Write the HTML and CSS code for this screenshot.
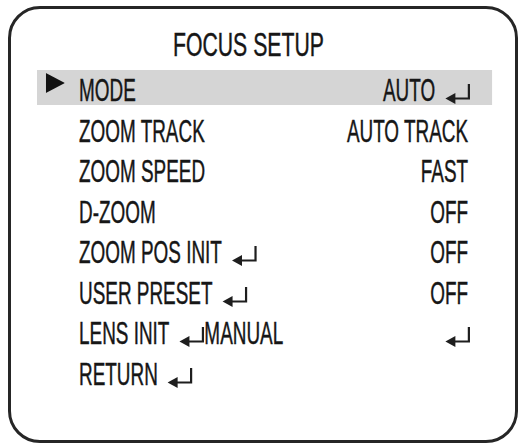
FILE: index.html
```html
<!DOCTYPE html>
<html lang="en">
<head>
<meta charset="utf-8">
<title>Focus Setup</title>
<link rel="stylesheet" href="styles.css">
</head>
<body>
<div class="frame">
  <h1 class="title"><span class="title-text">FOCUS SETUP</span></h1>
  <ul class="menu">
    <li class="row row-active">
      <span class="marker"><svg class="pointer" viewBox="0 0 19 20" preserveAspectRatio="none"><polygon points="0,0 19,10 0,20"/></svg></span>
      <span class="label">MODE</span>
      <span class="value value-arrow">AUTO<svg class="enter" viewBox="0 0 25 21" preserveAspectRatio="none"><path d="M23.5 1V15.5H8"/><polygon points="0,15.5 10,10 10,21"/></svg></span>
    </li>
    <li class="row">
      <span class="marker"></span>
      <span class="label">ZOOM TRACK</span>
      <span class="value">AUTO TRACK</span>
    </li>
    <li class="row">
      <span class="marker"></span>
      <span class="label">ZOOM SPEED</span>
      <span class="value">FAST</span>
    </li>
    <li class="row">
      <span class="marker"></span>
      <span class="label">D-ZOOM</span>
      <span class="value">OFF</span>
    </li>
    <li class="row">
      <span class="marker"></span>
      <span class="label">ZOOM POS INIT<svg class="enter" viewBox="0 0 25 21" preserveAspectRatio="none"><path d="M23.5 1V15.5H8"/><polygon points="0,15.5 10,10 10,21"/></svg></span>
      <span class="value">OFF</span>
    </li>
    <li class="row">
      <span class="marker"></span>
      <span class="label">USER PRESET<svg class="enter" viewBox="0 0 25 21" preserveAspectRatio="none"><path d="M23.5 1V15.5H8"/><polygon points="0,15.5 10,10 10,21"/></svg></span>
      <span class="value">OFF</span>
    </li>
    <li class="row">
      <span class="marker"></span>
      <span class="label">LENS INIT<svg class="enter" viewBox="0 0 25 21" preserveAspectRatio="none"><path d="M23.5 1V15.5H8"/><polygon points="0,15.5 10,10 10,21"/></svg>MANUAL</span>
      <span class="value value-arrow"><svg class="enter" viewBox="0 0 25 21" preserveAspectRatio="none"><path d="M23.5 1V15.5H8"/><polygon points="0,15.5 10,10 10,21"/></svg></span>
    </li>
    <li class="row">
      <span class="marker"></span>
      <span class="label">RETURN<svg class="enter" viewBox="0 0 25 21" preserveAspectRatio="none"><path d="M23.5 1V15.5H8"/><polygon points="0,15.5 10,10 10,21"/></svg></span>
      <span class="value"></span>
    </li>
  </ul>
</div>
</body>
</html>
```

FILE: styles.css
```css
html, body {
  margin: 0;
  padding: 0;
  background: #ffffff;
  overflow: hidden;
}

body {
  font-family: "Liberation Sans", Arial, sans-serif;
  color: #161616;
}

.frame {
  box-sizing: border-box;
  width: 510px;
  height: 437px;
  margin: 6px 0 0 8px;
  padding-top: 20px;
  border: 3px solid #262626;
  border-radius: 32px;
  overflow: hidden;
  background: #ffffff;
}

.title {
  margin: 0;
  padding-left: 162px;
  font-size: 33px;
  line-height: 32px;
  font-weight: normal;
  white-space: nowrap;
}

.title-text {
  display: inline-block;
  transform: scaleX(0.643);
  transform-origin: 0 0;
  -webkit-text-stroke: 0.45px #161616;
}

.menu {
  list-style: none;
  box-sizing: border-box;
  width: 770px;
  margin: 9px 0 0 26px;
  padding: 0;
  display: flex;
  flex-direction: column;
  gap: 5.5px;
  transform: scaleX(0.591);
  transform-origin: 0 0;
}

.row {
  box-sizing: border-box;
  display: flex;
  align-items: flex-start;
  height: 35px;
  padding: 5px 40.6px 0 0;
  font-size: 32px;
  line-height: 31px;
  white-space: nowrap;
  -webkit-text-stroke: 0.45px #161616;
}

.row-active {
  background: #d5d5d5;
}

.marker {
  flex: none;
  width: 71.1px;
  box-sizing: border-box;
  padding-left: 15.2px;
}

.pointer {
  display: block;
  width: 32.2px;
  height: 20px;
  margin-top: -2px;
  fill: #111111;
}

.label {
  flex: 1;
}

.value {
  flex: none;
  text-align: right;
}

.value-arrow {
  margin-right: -3.4px;
}

.enter {
  display: inline-block;
  width: 42.3px;
  height: 21px;
  margin-left: 16.9px;
  vertical-align: -3px;
  overflow: visible;
}

.enter path {
  fill: none;
  stroke: #1e1e1e;
  stroke-width: 2.2;
}

.enter polygon {
  fill: #1e1e1e;
}
```
